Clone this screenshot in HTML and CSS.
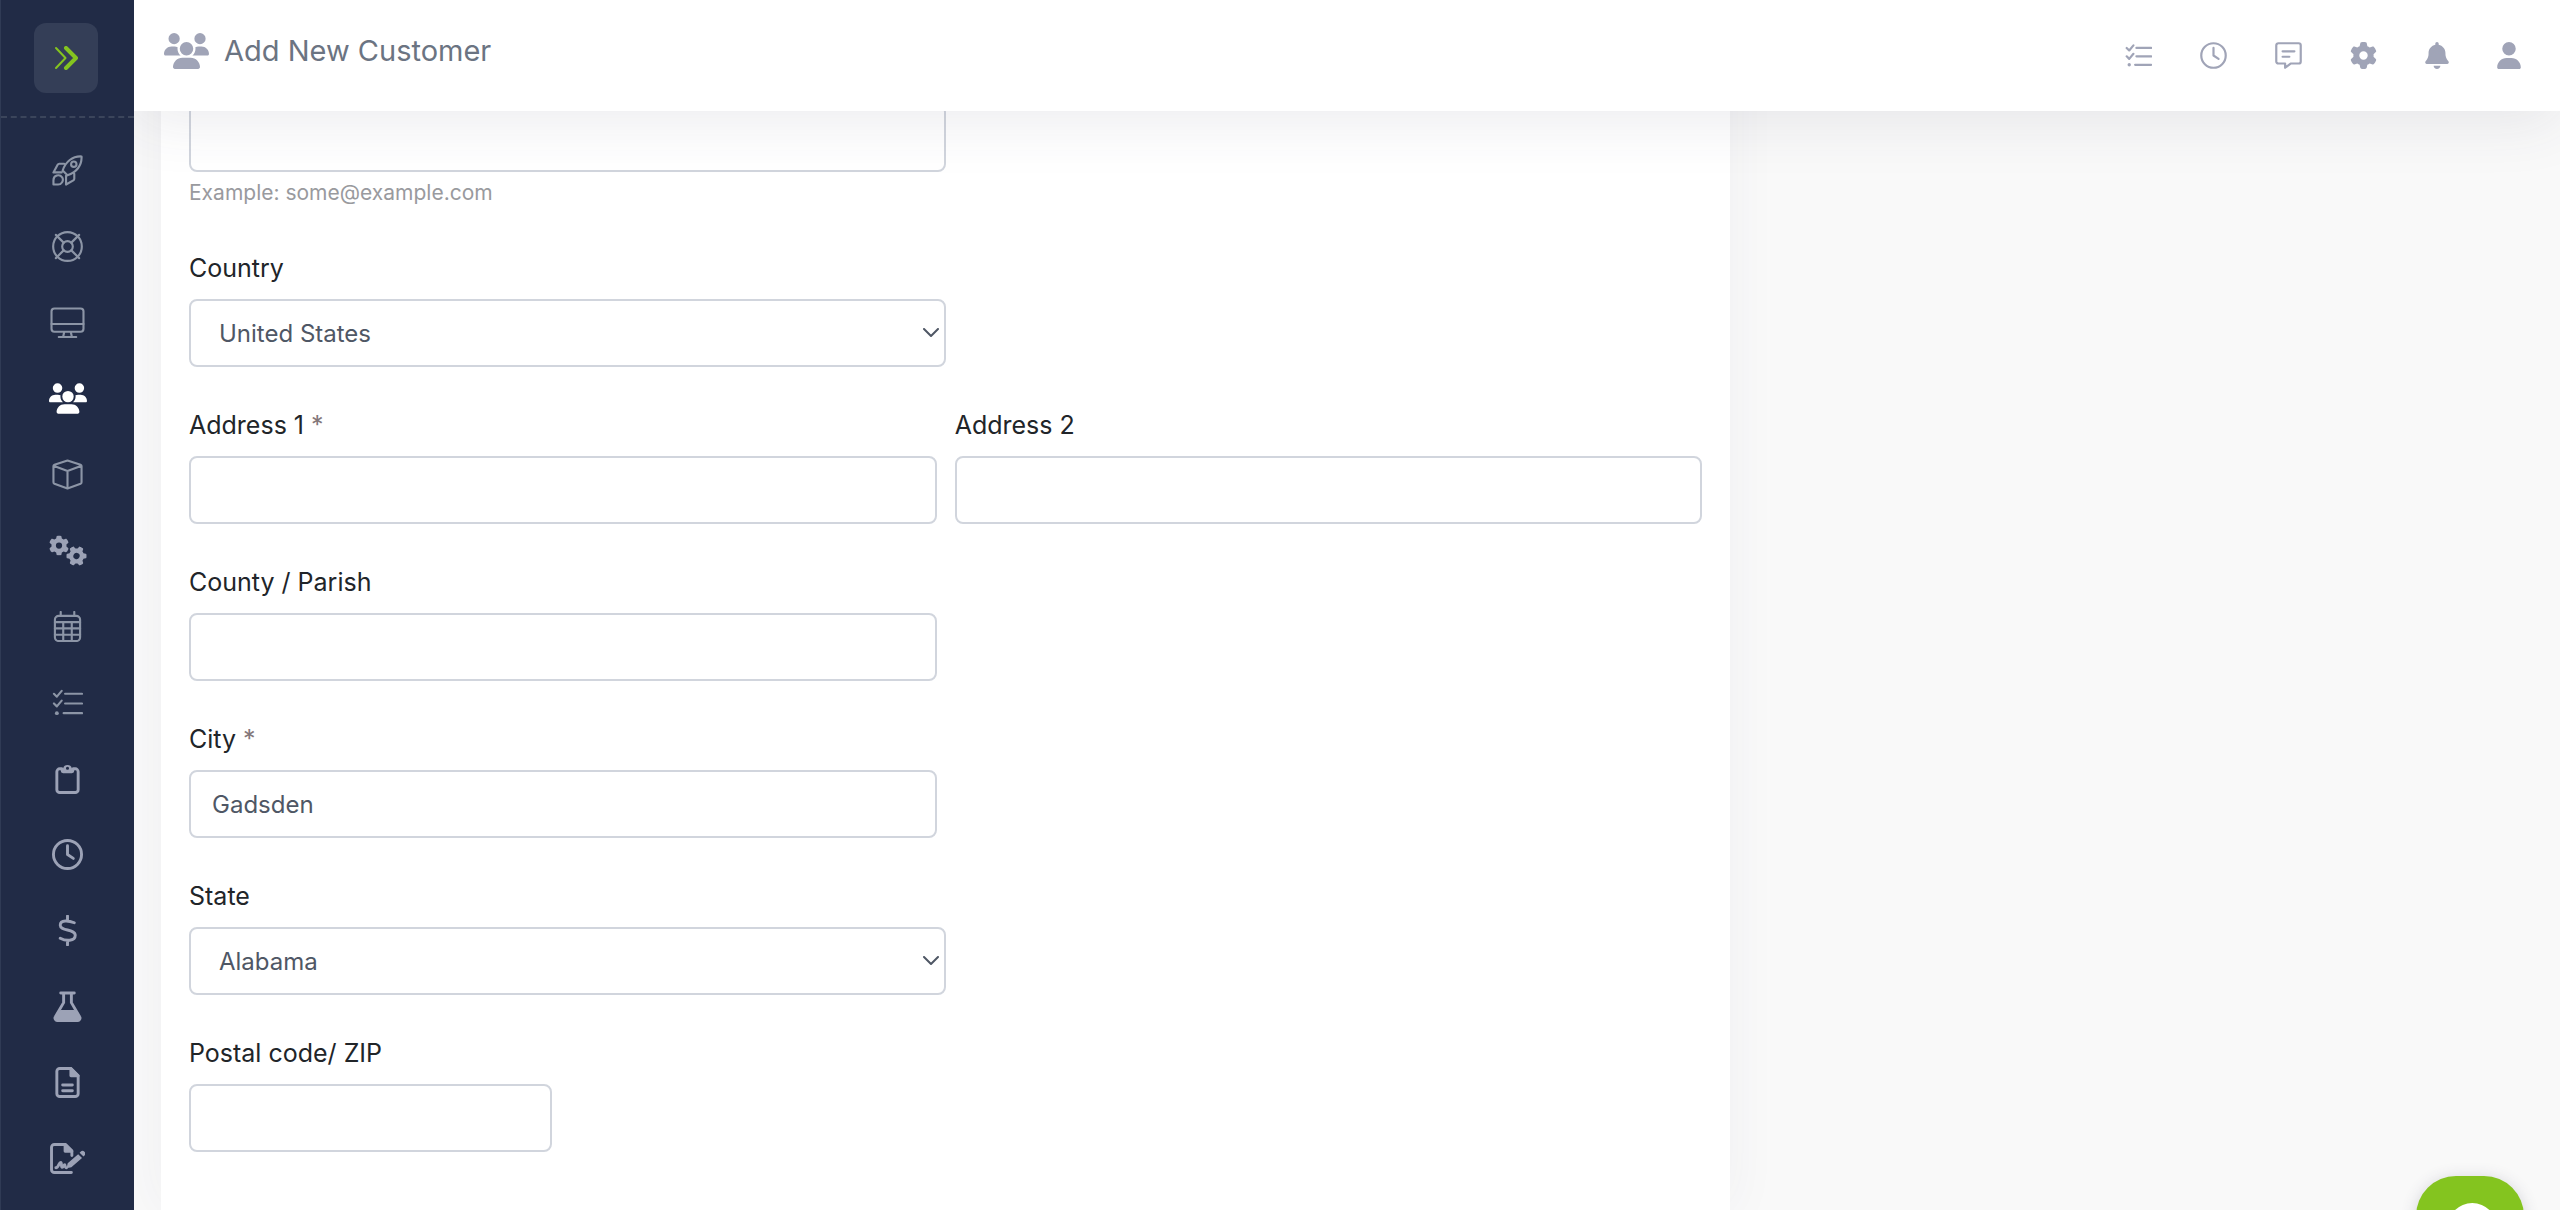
FILE: index.html
```html
<!DOCTYPE html>
<html lang="en">
<head>
    <meta charset="UTF-8">
    <meta name="viewport" content="width=device-width, initial-scale=1.0">
    <title>Add New Customer</title>
    <link rel="stylesheet" href="styles.css">
</head>
<body>
    <!-- Shared icons -->
    <svg class="sprite" aria-hidden="true">
        <symbol id="users" viewBox="0 0 640 512">
            <path fill="currentColor" d="M144 0a80 80 0 1 1 0 160A80 80 0 1 1 144 0zM512 0a80 80 0 1 1 0 160A80 80 0 1 1 512 0zM0 298.7C0 239.8 47.8 192 106.7 192l42.7 0c15.9 0 31 3.5 44.6 9.7c-1.3 7.2-1.9 14.7-1.9 22.3c0 38.2 16.8 72.5 43.3 96c-.2 0-.4 0-.7 0L21.3 320C9.6 320 0 310.4 0 298.7zM405.3 320c-.2 0-.4 0-.7 0c26.6-23.5 43.3-57.8 43.3-96c0-7.6-.7-15-1.9-22.3c13.6-6.3 28.7-9.7 44.6-9.7l42.7 0C592.2 192 640 239.8 640 298.7c0 11.8-9.6 21.3-21.3 21.3l-213.3 0zM224 224a96 96 0 1 1 192 0 96 96 0 1 1 -192 0zM128 485.3C128 411.7 187.7 352 261.3 352l117.3 0C452.3 352 512 411.7 512 485.3c0 14.7-11.9 26.7-26.7 26.7l-330.7 0c-14.7 0-26.7-11.9-26.7-26.7z"/>
        </symbol>
        <symbol id="gear" viewBox="0 0 512 512">
            <path fill="currentColor" d="M495.9 166.6c3.2 8.7 .5 18.4-6.4 24.6l-43.3 39.4c1.1 8.3 1.7 16.8 1.7 25.4s-.6 17.1-1.7 25.4l43.3 39.4c6.9 6.2 9.6 15.9 6.4 24.6c-4.4 11.9-9.7 23.3-15.8 34.3l-4.7 8.1c-6.6 11-14 21.4-22.1 31.2c-5.9 7.2-15.7 9.6-24.5 6.8l-55.7-17.7c-13.4 10.3-28.2 18.9-44 25.4l-12.5 57.1c-2 9.1-9 16.3-18.2 17.8c-13.8 2.3-28 3.5-42.5 3.5s-28.7-1.2-42.5-3.5c-9.2-1.5-16.2-8.7-18.2-17.8l-12.5-57.1c-15.8-6.5-30.6-15.1-44-25.4L83.1 425.9c-8.8 2.8-18.6 .3-24.5-6.8c-8.1-9.8-15.5-20.2-22.1-31.2l-4.7-8.1c-6.1-11-11.4-22.4-15.8-34.3c-3.2-8.7-.5-18.4 6.4-24.6l43.3-39.4C64.6 273.1 64 264.6 64 256s.6-17.1 1.7-25.4L22.4 191.2c-6.9-6.2-9.6-15.9-6.4-24.6c4.4-11.9 9.7-23.3 15.8-34.3l4.7-8.1c6.6-11 14-21.4 22.1-31.2c5.9-7.2 15.7-9.6 24.5-6.8l55.7 17.7c13.4-10.3 28.2-18.9 44-25.4l12.5-57.1c2-9.1 9-16.3 18.2-17.8C227.3 1.2 241.5 0 256 0s28.7 1.2 42.5 3.5c9.2 1.5 16.2 8.7 18.2 17.8l12.5 57.1c15.8 6.5 30.6 15.1 44 25.4l55.7-17.7c8.8-2.8 18.6-.3 24.5 6.8c8.1 9.8 15.5 20.2 22.1 31.2l4.7 8.1c6.1 11 11.4 22.4 15.8 34.3zM256 336a80 80 0 1 0 0-160 80 80 0 1 0 0 160z"/>
        </symbol>
        <symbol id="tasks" viewBox="0 0 32 32">
            <path d="M2 7l3 3 5-6M2 17l3 3 5-6M13.500 7H31M13.500 17H31M12 27H31"/>
            <circle cx="5" cy="27" r="2" fill="currentColor" stroke="none"/>
        </symbol>
        <symbol id="clock" viewBox="0 0 32 32">
            <circle cx="16" cy="16" r="14.500"/>
            <path d="M16 7v9l6 4"/>
        </symbol>
    </svg>

    <!-- Sidebar -->
    <aside class="sidebar">
        <div class="sidebar-top">
            <button class="toggle" type="button" aria-label="Toggle menu">
                <svg class="toggle-icon" viewBox="0 0 24 24">
                    <path class="thin" d="M2 2l9.500 10L2 22"/>
                    <path class="thick" d="M12 2l10 10-10 10"/>
                </svg>
            </button>
        </div>
        <nav class="menu">
            <a href="#" aria-label="Launch">
                <svg class="icon light" viewBox="0 0 32 32"><path d="M11 16C14 7 21 1 30.500 1.500C31 11 25 18 16 21zM12.500 9H7.500a2 2 0 0 0-1.700 1L1.500 18H10M23 19.500V24.500a2 2 0 0 1-1 1.700L14.500 30.500V21.500M1.500 30.500V26a5 5 0 0 1 9-3a5 5 0 0 1-4.500 7.500z"/><circle cx="22.500" cy="9.500" r="2.800"/></svg>
            </a>
            <a href="#" aria-label="Support">
                <svg class="icon light" viewBox="0 0 32 32"><circle cx="16" cy="16" r="14.800"/><circle cx="16" cy="16" r="5.500"/><path d="M4 4l8 8M28 4l-8 8M4 28l8-8M28 28l-8-8"/></svg>
            </a>
            <a href="#" aria-label="Devices">
                <svg class="icon light wide" viewBox="0 0 36 32"><rect x="1.500" y="1.500" width="33" height="24" rx="3"/><path d="M1.500 17.500h33M14.500 26l-1 5M21.500 26l1 5M9 31h18"/></svg>
            </a>
            <a class="active" href="#" aria-label="Customers">
                <svg class="icon people"><use href="#users"/></svg>
            </a>
            <a href="#" aria-label="Products">
                <svg class="icon light" viewBox="0 0 32 32"><path d="M16 1.500L29.500 6q1 .4 1 1.500V24q0 1.200-1 1.600L16 30.500 2.500 25.600q-1-.4-1-1.600V7.500q0-1.100 1-1.500zM1.500 7L16 12.500 30.500 7M16 12.500v18"/></svg>
            </a>
            <a href="#" aria-label="Processes">
                <svg class="icon people" viewBox="0 0 38 30"><use href="#gear" width="20" height="20"/><g transform="rotate(30 27.500 20.500)"><use href="#gear" x="17.500" y="10.500" width="20" height="20"/></g></svg>
            </a>
            <a href="#" aria-label="Calendar">
                <svg class="icon light" viewBox="0 0 32 32"><rect x="3" y="5" width="26" height="26" rx="4"/><path d="M9 1v4M23 1v4M3 11.500h26M3 18h26M3 24.500h26M11.600 11.500V31M20.400 11.500V31"/></svg>
            </a>
            <a href="#" aria-label="Tasks">
                <svg class="icon light"><use href="#tasks"/></svg>
            </a>
            <a href="#" aria-label="Clipboard">
                <svg class="icon" viewBox="0 0 32 32"><path d="M10 6H8a3 3 0 0 0-3 3v18.500a3 3 0 0 0 3 3h16a3 3 0 0 0 3-3V9a3 3 0 0 0-3-3h-2"/><path fill="currentColor" fill-rule="evenodd" stroke="none" d="M9 5.500h2.500a4.700 4.700 0 0 1 9 0H23V8a2.500 2.500 0 0 1-2.500 2.500h-9A2.500 2.500 0 0 1 9 8zM16 3.800a1.600 1.600 0 1 0 0 3.200 1.600 1.600 0 1 0 0-3.200z"/></svg>
            </a>
            <a href="#" aria-label="Time">
                <svg class="icon"><use href="#clock"/></svg>
            </a>
            <a href="#" aria-label="Billing">
                <svg class="icon" viewBox="0 0 32 32"><path d="M16 1v4M16 27v4M23 8C18 6 8.500 4.500 8.500 10.500C8.500 17 24 14 24 21C24 27.500 14 27 8.500 24"/></svg>
            </a>
            <a href="#" aria-label="Lab">
                <svg class="icon" viewBox="0 0 32 32"><path d="M9 2h14M12 2v10L3.500 26.500a2.600 2.600 0 0 0 2.300 4h20.400a2.600 2.600 0 0 0 2.300-4L20 12V2"/><path fill="currentColor" d="M9 21h14l5 7.500-2 2H6l-2-2z"/></svg>
            </a>
            <a href="#" aria-label="Documents">
                <svg class="icon" viewBox="0 0 32 32"><path d="M8 1.500h11.500L27 9v18.500a3 3 0 0 1-3 3H8a3 3 0 0 1-3-3v-23a3 3 0 0 1 3-3zM11 18.500h10M11 24.500h10"/><path fill="currentColor" d="M19.500 1.500V9H27z"/></svg>
            </a>
            <a href="#" aria-label="Contracts">
                <svg class="icon wide" viewBox="0 0 36 32"><path d="M22 30.500H4.500a3 3 0 0 1-3-3v-23a3 3 0 0 1 3-3h11.500L22.500 8v5M6 25.500c3 0 3-5.500 5-5.500 1.500 0 0 5 1.500 5s1.500-2.500 2.500-2.500 0 3 2 3"/><path fill="currentColor" d="M15.500 1.500V8.500h7z"/><path fill="currentColor" stroke="none" d="M29 11.500l4 4L22 25l-5 1 1.200-5zM30.500 10l1-1a2.500 2.500 0 0 1 4 4l-1 1z"/></svg>
            </a>
        </nav>
    </aside>

    <div class="page">
        <!-- Top bar -->
        <header class="topbar">
            <div class="page-title">
                <svg class="title-icon"><use href="#users"/></svg>
                <h1>Add New Customer</h1>
            </div>
            <div class="tools">
                <button type="button" aria-label="Tasks"><svg class="tool"><use href="#tasks"/></svg></button>
                <button type="button" aria-label="Time"><svg class="tool"><use href="#clock"/></svg></button>
                <button type="button" aria-label="Messages">
                    <svg class="tool" viewBox="0 0 32 32"><path d="M4 1.500h24a2.500 2.500 0 0 1 2.500 2.500v19a2.500 2.500 0 0 1-2.500 2.500H18.500L12 30.500v-5H4A2.500 2.500 0 0 1 1.500 23V4A2.500 2.500 0 0 1 4 1.500zM9 11h14M9 17.500h8"/></svg>
                </button>
                <button type="button" aria-label="Settings"><svg class="tool solid"><use href="#gear"/></svg></button>
                <button type="button" aria-label="Notifications">
                    <svg class="tool solid narrow" viewBox="0 0 448 512"><path d="M224 0c-17.700 0-32 14.300-32 32l0 19.200C119 66 64 130.600 64 208l0 18.800c0 47-17.300 92.400-48.500 127.600l-7.400 8.300c-8.400 9.400-10.400 22.900-5.300 34.400S19.400 416 32 416l384 0c12.600 0 24-7.400 29.200-18.900s3.100-25-5.300-34.400l-7.400-8.300C401.300 319.200 384 273.900 384 226.800l0-18.800c0-77.400-55-142-128-156.800L256 32c0-17.700-14.300-32-32-32zm45.300 493.300c12-12 18.700-28.300 18.700-45.300l-64 0-64 0c0 17 6.700 33.300 18.700 45.300s28.300 18.700 45.300 18.700s33.300-6.700 45.300-18.700z"/></svg>
                </button>
                <button type="button" aria-label="Account">
                    <svg class="tool solid narrow" viewBox="0 0 448 512"><path d="M224 256A128 128 0 1 0 224 0a128 128 0 1 0 0 256zm-45.700 48C79.800 304 0 383.800 0 482.300C0 498.700 13.300 512 29.700 512l388.600 0c16.400 0 29.700-13.300 29.700-29.700C448 383.800 368.200 304 269.700 304l-91.400 0z"/></svg>
                </button>
            </div>
        </header>

        <!-- Customer form -->
        <main class="content">
            <form class="card">
                <div class="field">
                    <input class="control half" type="email" aria-label="Email" aria-describedby="email-help">
                    <p class="help" id="email-help">Example: some@example.com</p>
                </div>
                <div class="field">
                    <label for="country">Country</label>
                    <div class="select half">
                        <select class="control" id="country"><option>United States</option></select>
                        <svg class="chevron" viewBox="0 0 16 10"><path d="M1 1l7 7 7-7"/></svg>
                    </div>
                </div>
                <div class="row">
                    <div class="field">
                        <label for="address1">Address 1 <span class="required">*</span></label>
                        <input class="control" id="address1" type="text">
                    </div>
                    <div class="field">
                        <label for="address2">Address 2</label>
                        <input class="control" id="address2" type="text">
                    </div>
                </div>
                <div class="row">
                    <div class="field">
                        <label for="county">County / Parish</label>
                        <input class="control" id="county" type="text">
                    </div>
                </div>
                <div class="row">
                    <div class="field">
                        <label for="city">City <span class="required">*</span></label>
                        <input class="control" id="city" type="text" value="Gadsden">
                    </div>
                </div>
                <div class="field">
                    <label for="state">State</label>
                    <div class="select half">
                        <select class="control" id="state"><option>Alabama</option></select>
                        <svg class="chevron" viewBox="0 0 16 10"><path d="M1 1l7 7 7-7"/></svg>
                    </div>
                </div>
                <div class="field">
                    <label for="zip">Postal code/ ZIP</label>
                    <input class="control short" id="zip" type="text">
                </div>
            </form>
        </main>
    </div>

    <!-- Chat launcher -->
    <button class="chat" type="button" aria-label="Open chat">
        <svg class="chat-icon" viewBox="0 0 48 48"><path d="M26 0a22 22 0 1 1 0 44H4V22A22 22 0 0 1 26 0z"/></svg>
    </button>
</body>
</html>
```
FILE: styles.css
```css
* {
    box-sizing: border-box;
}

body {
    margin: 0;
    display: flex;
    height: 100vh;
    overflow: hidden;
    background: #f9f9f9;
    color: #212529;
    font-family: Inter, "Liberation Sans", sans-serif;
    font-size: 24px;
}

button {
    padding: 0;
    border: none;
    background: none;
    cursor: pointer;
}

svg {
    display: block;
    fill: none;
    stroke: currentColor;
    stroke-width: 3;
    stroke-linecap: round;
    stroke-linejoin: round;
}

.sprite {
    position: absolute;
    width: 0;
    height: 0;
}

#users,
#gear {
    stroke: none;
}

/* Sidebar */
.sidebar {
    flex: none;
    width: 134px;
    overflow: hidden;
    background: #212b46;
    border-left: 1px solid #303b55;
    z-index: 3;
}

.sidebar-top {
    display: flex;
    justify-content: center;
    padding: 23px 3px 23px 0;
    border-bottom: 2px dashed #3b455b;
}

.toggle {
    display: flex;
    align-items: center;
    justify-content: center;
    width: 64px;
    height: 70px;
    border-radius: 12px;
    background: #343e57;
}

.toggle-icon {
    width: 24px;
    height: 24px;
    color: #84c41f;
}

.toggle-icon .thin {
    stroke-width: 2;
}

.toggle-icon .thick {
    stroke-width: 4;
}

.menu {
    padding-top: 14px;
}

.menu a {
    display: flex;
    align-items: center;
    justify-content: center;
    height: 76px;
    color: #9ca2b6;
}

.menu a.active {
    color: #fff;
}

.icon {
    width: 31px;
    height: 31px;
}

.icon.light {
    color: #8c95a6;
    stroke-width: 2.2;
}

.icon.wide {
    width: 35px;
}

.icon.people {
    width: 38px;
}

/* Top bar */
.page {
    flex: 1;
    min-width: 0;
}

.topbar {
    position: relative;
    z-index: 2;
    display: flex;
    align-items: center;
    justify-content: space-between;
    height: 111px;
    padding: 0 39px 0 30px;
    background: #fff;
    box-shadow: 0 10px 60px rgba(60, 60, 90, 0.1);
}

.page-title {
    display: flex;
    align-items: center;
    gap: 15px;
    padding-bottom: 10px;
}

.title-icon {
    width: 45px;
    height: 36px;
    color: #a0a4b7;
}

h1 {
    margin: 0;
    color: #6b7482;
    font-size: 29px;
    font-weight: 400;
    line-height: 36px;
}

.tools {
    display: flex;
    gap: 48px;
}

.tools button {
    color: #a0a4b7;
}

.tool {
    width: 27px;
    height: 27px;
    stroke-width: 2.6;
}

.tool.solid {
    fill: currentColor;
    stroke: none;
}

.tool.narrow {
    width: 24px;
}

/* Form, scrolled partly under the top bar */
.content {
    display: grid;
    grid-template-columns: 2fr 1fr;
    gap: 18px;
    min-height: 100vh;
    margin-top: -111px;
    padding: 0 27px;
}

.card {
    padding: 104px 28px 0;
    background: #fff;
    box-shadow: 0 0 50px rgba(60, 60, 90, 0.05);
}

.row {
    display: grid;
    grid-template-columns: 1fr 1fr;
    gap: 18px;
}

.field {
    margin-bottom: 39px;
}

label {
    display: block;
    margin-bottom: 12px;
    font-size: 25px;
    line-height: 38px;
}

.required {
    color: #83777a;
}

.control {
    display: block;
    width: 100%;
    height: 68px;
    padding: 0 21px;
    border: 2px solid #d1d5dd;
    border-radius: 8px;
    background: transparent;
    color: #4f5765;
    font-family: inherit;
    font-size: 24px;
}

.half {
    width: 50%;
}

.short {
    width: 24%;
}

.select {
    position: relative;
}

.select .control {
    appearance: none;
    padding-left: 28px;
}

.chevron {
    position: absolute;
    top: 29px;
    right: 7px;
    width: 16px;
    height: 10px;
    color: #4f5765;
    stroke-width: 2;
    pointer-events: none;
}

.help {
    margin: 4px 0 0;
    color: #999a9e;
    font-size: 21px;
    line-height: 34px;
}

/* Chat launcher */
.chat {
    position: fixed;
    right: 36px;
    bottom: -74px;
    z-index: 4;
    display: flex;
    align-items: center;
    justify-content: center;
    width: 108px;
    height: 108px;
    border-radius: 40px;
    background: #84c41f;
    box-shadow: 0 2px 16px rgba(60, 60, 90, 0.2);
}

.chat-icon {
    width: 54px;
    height: 54px;
    fill: #fff;
    stroke: none;
}
```
